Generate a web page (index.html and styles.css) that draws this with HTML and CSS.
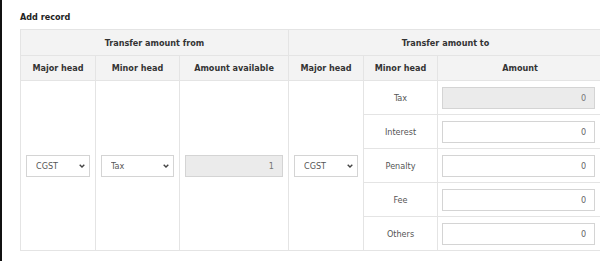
FILE: index.html
```html
<!DOCTYPE html>
<html>
<head>
<meta charset="utf-8">
<link rel="stylesheet" href="styles.css">
</head>
<body>
<div class="page">
  <div class="title">Add record</div>
  <table class="grid">
    <colgroup>
      <col class="c1"><col class="c2"><col class="c3"><col class="c4"><col class="c5"><col class="c6">
    </colgroup>
    <thead>
      <tr class="h1">
        <th colspan="3">Transfer amount from</th>
        <th colspan="3">Transfer amount to</th>
      </tr>
      <tr class="h2">
        <th>Major head</th>
        <th>Minor head</th>
        <th>Amount available</th>
        <th>Major head</th>
        <th>Minor head</th>
        <th>Amount</th>
      </tr>
    </thead>
    <tbody>
      <tr>
        <td rowspan="5" class="mid">
          <div class="sel"><select><option>CGST</option></select><svg class="chev" width="6" height="4" viewBox="0 0 6 4"><path d="M0.7 0.7 L3 3 L5.3 0.7" fill="none" stroke="#444" stroke-width="1.4"/></svg></div>
        </td>
        <td rowspan="5" class="mid">
          <div class="sel"><select><option>Tax</option></select><svg class="chev" width="6" height="4" viewBox="0 0 6 4"><path d="M0.7 0.7 L3 3 L5.3 0.7" fill="none" stroke="#444" stroke-width="1.4"/></svg></div>
        </td>
        <td rowspan="5" class="mid">
          <input class="num dis" value="1" disabled>
        </td>
        <td rowspan="5" class="mid">
          <div class="sel"><select><option>CGST</option></select><svg class="chev" width="6" height="4" viewBox="0 0 6 4"><path d="M0.7 0.7 L3 3 L5.3 0.7" fill="none" stroke="#444" stroke-width="1.4"/></svg></div>
        </td>
        <td class="lbl">Tax</td>
        <td class="amt"><input class="num dis" value="0" disabled></td>
      </tr>
      <tr>
        <td class="lbl">Interest</td>
        <td class="amt"><input class="num" value="0"></td>
      </tr>
      <tr>
        <td class="lbl">Penalty</td>
        <td class="amt"><input class="num" value="0"></td>
      </tr>
      <tr>
        <td class="lbl">Fee</td>
        <td class="amt"><input class="num" value="0"></td>
      </tr>
      <tr>
        <td class="lbl">Others</td>
        <td class="amt"><input class="num" value="0"></td>
      </tr>
    </tbody>
  </table>
</div>
</body>
</html>
```
FILE: styles.css
```css
html, body {
  margin: 0;
  padding: 0;
  background: #fff;
}
body {
  font-family: "DejaVu Sans Condensed", "DejaVu Sans", sans-serif;
  font-size: 9px;
  color: #555;
}
.page {
  border-left: 2px solid #111;
  height: 261px;
  box-sizing: border-box;
  padding: 11px 0 0 18px;
  overflow: hidden;
}
.title {
  font-weight: bold;
  color: #222;
  font-size: 9px;
  line-height: 12px;
  margin-bottom: 6px;
}
.grid {
  border-collapse: collapse;
  table-layout: fixed;
  width: 582px;
}
.c1 { width: 75px; }
.c2 { width: 84px; }
.c3 { width: 109px; }
.c4 { width: 75px; }
.c5 { width: 74px; }
.c6 { width: 165px; }
.grid th, .grid td {
  border: 1px solid #e4e4e4;
  padding: 0;
  text-align: center;
}
.grid th {
  background: #f3f3f3;
  color: #333;
  font-weight: bold;
}
.h1 th { height: 25px; }
.h2 th { height: 24px; }
.grid td.mid {
  padding: 0 5px;
  vertical-align: middle;
}
.grid td.lbl {
  height: 33px;
  color: #555;
}
.grid td.amt {
  padding: 0 7px 0 4px;
}
.sel {
  position: relative;
}
.sel select {
  appearance: none;
  -webkit-appearance: none;
  display: block;
  width: 100%;
  height: 22px;
  box-sizing: border-box;
  border: 1px solid #d4d4d4;
  border-radius: 0;
  background: #fff;
  font-family: inherit;
  font-size: 9px;
  color: #555;
  padding: 0 0 0 9px;
  margin: 0;
}
.chev {
  position: absolute;
  right: 5px;
  top: 9px;
}
.num {
  display: block;
  width: 100%;
  height: 22px;
  box-sizing: border-box;
  border: 1px solid #d4d4d4;
  border-radius: 0;
  background: #fff;
  font-family: inherit;
  font-size: 9px;
  color: #666;
  text-align: right;
  padding: 0 8px 0 4px;
  margin: 0;
}
.num.dis {
  background: #ebebeb;
  color: #777;
}
```
